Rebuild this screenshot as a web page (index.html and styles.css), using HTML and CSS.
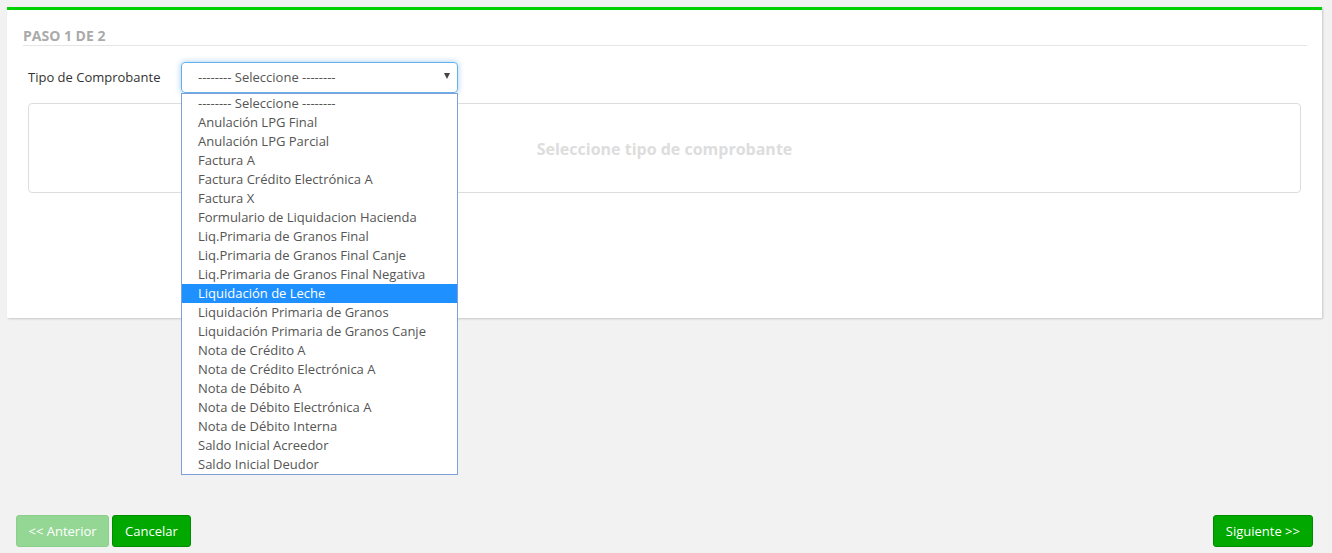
FILE: index.html
```html
<!DOCTYPE html>
<html lang="es">
<head>
  <meta charset="UTF-8" />
  <title>Comprobantes - Paso 1</title>
  <link rel="stylesheet" href="styles.css">
</head>
<body>
  <div class="panel">
    <h4 class="paso">PASO 1 DE 2</h4>

    <div class="form-row">
      <label class="label">Tipo de Comprobante</label>
      <div class="select-wrap">
        <div class="select">
          <span>-------- Seleccione --------</span>
          <span class="caret"></span>
        </div>
        <ul class="dropdown">
          <li>-------- Seleccione --------</li>
          <li>Anulación LPG Final</li>
          <li>Anulación LPG Parcial</li>
          <li>Factura A</li>
          <li>Factura Crédito Electrónica A</li>
          <li>Factura X</li>
          <li>Formulario de Liquidacion Hacienda</li>
          <li>Liq.Primaria de Granos Final</li>
          <li>Liq.Primaria de Granos Final Canje</li>
          <li>Liq.Primaria de Granos Final Negativa</li>
          <li class="activo">Liquidación de Leche</li>
          <li>Liquidación Primaria de Granos</li>
          <li>Liquidación Primaria de Granos Canje</li>
          <li>Nota de Crédito A</li>
          <li>Nota de Crédito Electrónica A</li>
          <li>Nota de Débito A</li>
          <li>Nota de Débito Electrónica A</li>
          <li>Nota de Débito Interna</li>
          <li>Saldo Inicial Acreedor</li>
          <li>Saldo Inicial Deudor</li>
        </ul>
      </div>
    </div>

    <div class="vacio">Seleccione tipo de comprobante</div>
  </div>

  <div class="acciones">
    <div class="izq">
      <button class="btn btn-off">&lt;&lt; Anterior</button>
      <button class="btn">Cancelar</button>
    </div>
    <button class="btn">Siguiente &gt;&gt;</button>
  </div>
</body>
</html>
```

FILE: styles.css
```css
body {
  font-family: "Open Sans", Arial, sans-serif;
  font-size: 13px;
  color: #333;
  background-color: #f2f2f2;
  margin: 0;
  padding-top: 7px;
}
.panel {
  background-color: white;
  margin: 0 10px 0 7px;
  border-top: 3px solid #00d200;
  box-shadow: 1px 1px 2px rgba(0,0,0,0.18);
  padding: 0 21px 125px 21px;
}
.paso {
  margin: 17px -6px 0 -5px;
  font-size: 14px;
  line-height: 18px;
  font-weight: bold;
  color: #aaa;
  border-bottom: 1px solid #e5e5e5;
}
.form-row {
  display: flex;
  align-items: center;
  margin-top: 16px;
}
.label {
  width: 153px;
  color: #333;
  margin-top: -1px;
}
.select-wrap {
  position: relative;
  width: 277px;
}
.select {
  height: 31px;
  width: 277px;
  box-sizing: border-box;
  border: 1px solid #66afe9;
  border-radius: 4px;
  box-shadow: 0 0 6px rgba(102,175,233,0.6);
  display: flex;
  align-items: center;
  justify-content: space-between;
  padding: 0 7px 1px 16px;
  color: #555;
}
.caret {
  width: 0;
  height: 0;
  border-left: 3px solid transparent;
  border-right: 3px solid transparent;
  border-top: 6px solid #444;
  margin-top: -2px;
}
.dropdown {
  position: absolute;
  top: 31px;
  left: 0;
  width: 275px;
  margin: 0;
  padding: 0;
  list-style: none;
  background-color: white;
  border: 1px solid #7f9fd8;
  z-index: 5;
}
.dropdown li {
  height: 19px;
  line-height: 19px;
  padding-left: 16px;
  color: #555;
  white-space: nowrap;
}
.dropdown li.activo {
  background-color: #1e90ff;
  color: white;
}
.vacio {
  margin-top: 10px;
  height: 88px;
  border: 1px solid #ddd;
  border-radius: 4px;
  display: flex;
  align-items: center;
  justify-content: center;
  padding-top: 1px;
  box-sizing: content-box;
  height: 87px;
  font-size: 16px;
  font-weight: bold;
  color: #ddd;
}
.acciones {
  display: flex;
  justify-content: space-between;
  margin-top: 197px;
  padding: 0 19px 0 16px;
}
.izq {
  display: flex;
  gap: 3px;
}
.btn {
  font-family: "Open Sans", Arial, sans-serif;
  font-size: 13px;
  color: white;
  background-color: #00a800;
  border: 1px solid #008c00;
  border-radius: 3px;
  height: 32px;
  padding: 0 12px;
}
.btn-off {
  background-color: #94d694;
  border-color: #8ad08a;
  padding: 0 11.5px;
}
```
